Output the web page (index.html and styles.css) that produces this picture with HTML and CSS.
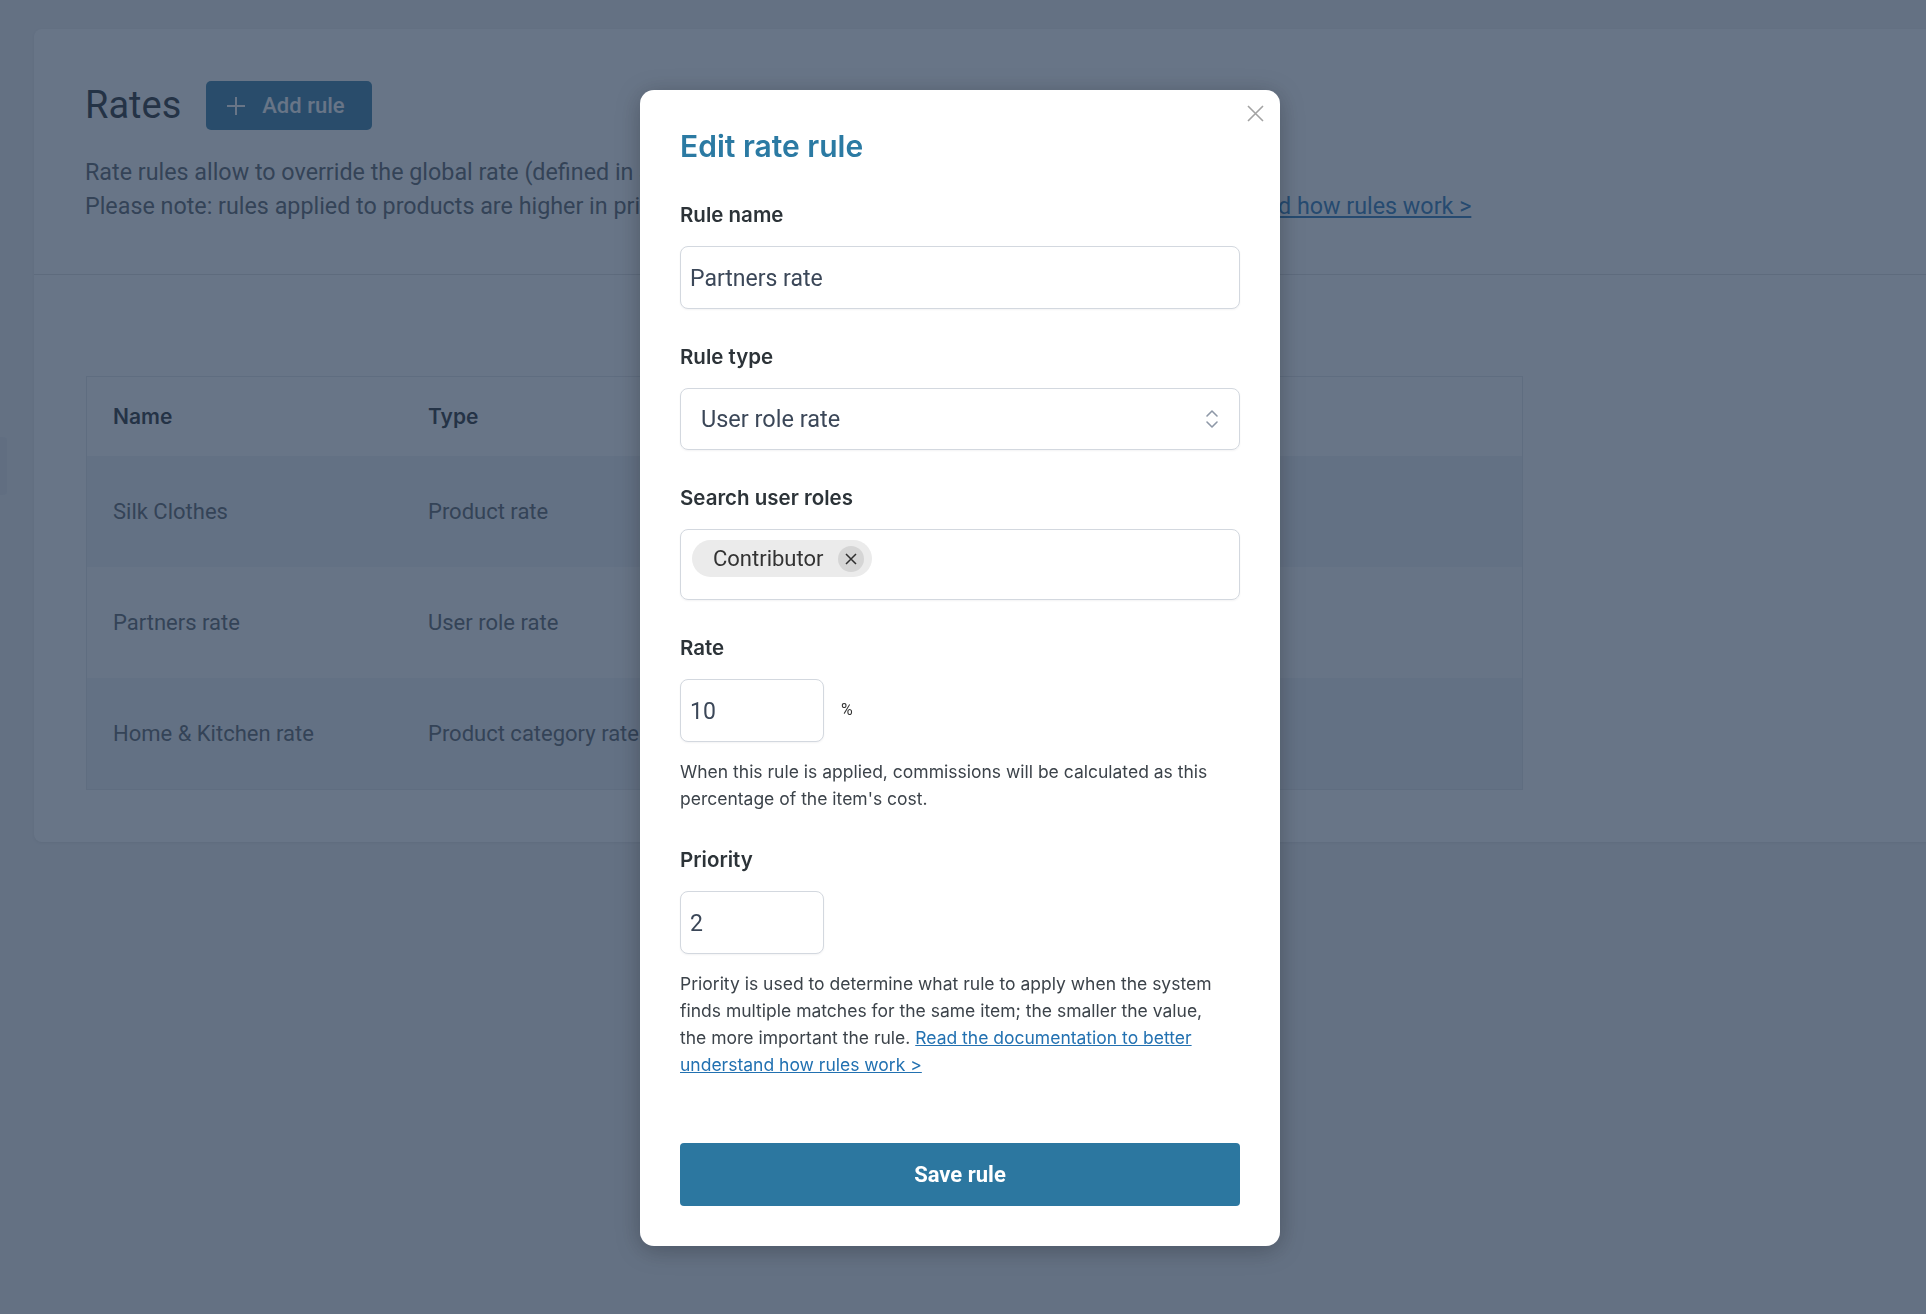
FILE: index.html
```html
<!DOCTYPE html>
<html lang="en">
<head>
  <meta charset="UTF-8" />
  <title>Rates</title>
  <link rel="stylesheet" href="styles.css">
</head>
<body>

<div class="side-tab"></div>

<div class="card">
  <div class="card-head">
    <div class="title-row">
      <h1>Rates</h1>
      <button class="btn-add">
        <svg width="20" height="20" viewBox="0 0 20 20"><path d="M10 1v18M1 10h18" stroke="#fff" stroke-width="2" fill="none"/></svg>
        Add rule
      </button>
    </div>
    <p class="desc">
      Rate rules allow to override the global rate (defined in Settings) for specific products, categories or users.<br>
      <span class="nowrap">Please note: rules applied to products are higher in priority than others. <a href="#">Read the documentation to better understand how rules work &gt;</a></span>
    </p>
  </div>

  <div class="card-body">
    <table class="rules">
      <thead>
        <tr><th class="col-name">Name</th><th class="col-type">Type</th><th>Rate</th><th>Priority</th></tr>
      </thead>
      <tbody>
        <tr><td>Silk Clothes</td><td>Product rate</td><td>15%</td><td>1</td></tr>
        <tr><td>Partners rate</td><td>User role rate</td><td>10%</td><td>2</td></tr>
        <tr><td>Home &amp; Kitchen rate</td><td>Product category rate</td><td>8%</td><td>3</td></tr>
      </tbody>
    </table>
  </div>
</div>

<div class="overlay">
  <div class="modal">
    <button class="close" aria-label="Close">
      <svg width="17" height="17" viewBox="0 0 17 17"><path d="M1 1l15 15M16 1L1 16" stroke="#a3a3a3" stroke-width="1.6" fill="none"/></svg>
    </button>

    <h2>Edit rate rule</h2>

    <div class="field">
      <label>Rule name</label>
      <input class="input" type="text" value="Partners rate">
    </div>

    <div class="field">
      <label>Rule type</label>
      <div class="select">
        <span>User role rate</span>
        <svg width="14" height="20" viewBox="0 0 14 20"><path d="M2 7l5-5 5 5M2 13l5 5 5-5" stroke="#8e98a7" stroke-width="1.6" fill="none" stroke-linecap="round" stroke-linejoin="round"/></svg>
      </div>
    </div>

    <div class="field">
      <label>Search user roles</label>
      <div class="multi">
        <span class="chip">Contributor
          <span class="chip-x"><svg width="12" height="12" viewBox="0 0 12 12"><path d="M1 1l10 10M11 1L1 11" stroke="#2f2f2f" stroke-width="1.5" fill="none"/></svg></span>
        </span>
      </div>
    </div>

    <div class="field">
      <label>Rate</label>
      <div class="rate-row">
        <input class="input small" type="text" value="10">
        <span class="unit">%</span>
      </div>
      <p class="help">When this rule is applied, commissions will be calculated as this percentage of the item's cost.</p>
    </div>

    <div class="field last">
      <label>Priority</label>
      <input class="input small" type="text" value="2">
      <p class="help">Priority is used to determine what rule to apply when the system finds multiple matches for the same item; the smaller the value, the more important the rule. <a href="#">Read the documentation to better understand how rules work &gt;</a></p>
    </div>

    <button class="btn-save">Save rule</button>
  </div>
</div>

</body>
</html>
```

FILE: styles.css
```css
body { margin: 0; background: #f0f0f1; font-family: Roboto, "Liberation Sans", sans-serif; overflow: hidden; height: 1314px; }
a { color: #2271b1; }

.side-tab { position: fixed; left: 0; top: 437px; width: 7px; height: 58px; background: #e6e8eb; border-radius: 0 4px 4px 0; }

.card { margin: 29px 0 0 34px; width: 1950px; background: #fff; border-radius: 8px; box-shadow: 0 1px 3px rgba(0,0,0,.08); }
.card-head { padding: 52px 51px 51px; border-bottom: 1px solid #dcdcde; }
.title-row { display: flex; align-items: center; gap: 25px; }
.title-row h1 { margin: 0; font-size: 38px; font-weight: 400; line-height: 49px; color: #1d2327; }
.btn-add { display: flex; align-items: center; gap: 16px; height: 49px; padding: 0 27px 0 20px; border: none; border-radius: 5px; background: #2c77a0; color: #fff; font-family: inherit; font-size: 22px; font-weight: 500; }
.desc { margin: 25px 0 0; font-size: 23.3px; line-height: 34px; color: #50575e; }
.nowrap { white-space: nowrap; }

.card-body { padding: 101px 0 52px 52px; }
.rules { width: 1437px; border-collapse: collapse; border: 1px solid #e2e4e7; background: #fff; }
.rules th { height: 79px; padding: 0 26px; text-align: left; font-family: Inter, Roboto, sans-serif; font-size: 21px; font-weight: 600; color: #1d2327; }
.rules td { height: 111px; padding: 0 26px; font-size: 22px; color: #50575e; }
.rules .col-name, .rules .col-type { width: 263px; }
.rules tbody tr:nth-child(odd) { background: #eef1f4; }
.rules tbody tr:nth-child(even) { background: #fafbfc; }

.overlay { position: fixed; inset: 0; background: rgba(40,58,84,.7); display: flex; justify-content: center; align-items: flex-start; padding: 90px 6px 0 0; }
.modal { position: relative; width: 640px; box-sizing: border-box; padding: 40px; background: #fff; border-radius: 14px; box-shadow: 0 4px 24px rgba(0,0,0,.25); }
.close { position: absolute; top: 15px; right: 16px; padding: 0; border: none; background: none; line-height: 0; }
.modal h2 { margin: 0 0 41px; font-family: Inter, Roboto, sans-serif; font-size: 30px; font-weight: 600; line-height: 32px; color: #2b7aa3; }

.field { margin-bottom: 36px; }
.field.last { margin-bottom: 0; }
.field label { display: block; margin-bottom: 19px; font-family: Inter, Roboto, sans-serif; font-size: 20.5px; font-weight: 600; line-height: 24px; color: #2c3338; }

.input { display: block; width: 100%; height: 63px; box-sizing: border-box; padding: 2px 9px 0; border: 1px solid #d3d8df; border-radius: 8px; box-shadow: 0 1px 2px rgba(16,24,40,.05); font-family: inherit; font-size: 23px; color: #3b4758; background: #fff; }
.input.small { width: 144px; }

.select { display: flex; align-items: center; justify-content: space-between; height: 62px; box-sizing: border-box; padding: 0 20px; border: 1px solid #d3d8df; border-radius: 8px; box-shadow: 0 1px 2px rgba(16,24,40,.05); font-size: 23.5px; color: #3b4758; }

.multi { min-height: 71px; box-sizing: border-box; padding: 10px 11px; border: 1px solid #d3d8df; border-radius: 8px; box-shadow: 0 1px 2px rgba(16,24,40,.05); }
.chip { display: inline-flex; align-items: center; gap: 15px; height: 37px; padding: 0 8px 0 21px; border-radius: 19px; background: #ebebeb; font-size: 22px; color: #333; }
.chip-x { display: flex; align-items: center; justify-content: center; width: 26px; height: 26px; border-radius: 50%; background: #d5d5d5; }

.rate-row { display: flex; align-items: center; gap: 17px; }
.unit { font-size: 16px; color: #333; margin-top: -3px; }

.help { width: 548px; margin: 16px 0 0; font-family: Inter, Roboto, sans-serif; font-size: 17.5px; line-height: 27px; color: #3c434a; }

.btn-save { display: block; width: 100%; height: 63px; margin-top: 65px; border: none; border-radius: 4px; background: #2c77a0; color: #fff; font-family: inherit; font-size: 22px; font-weight: 700; }
```
